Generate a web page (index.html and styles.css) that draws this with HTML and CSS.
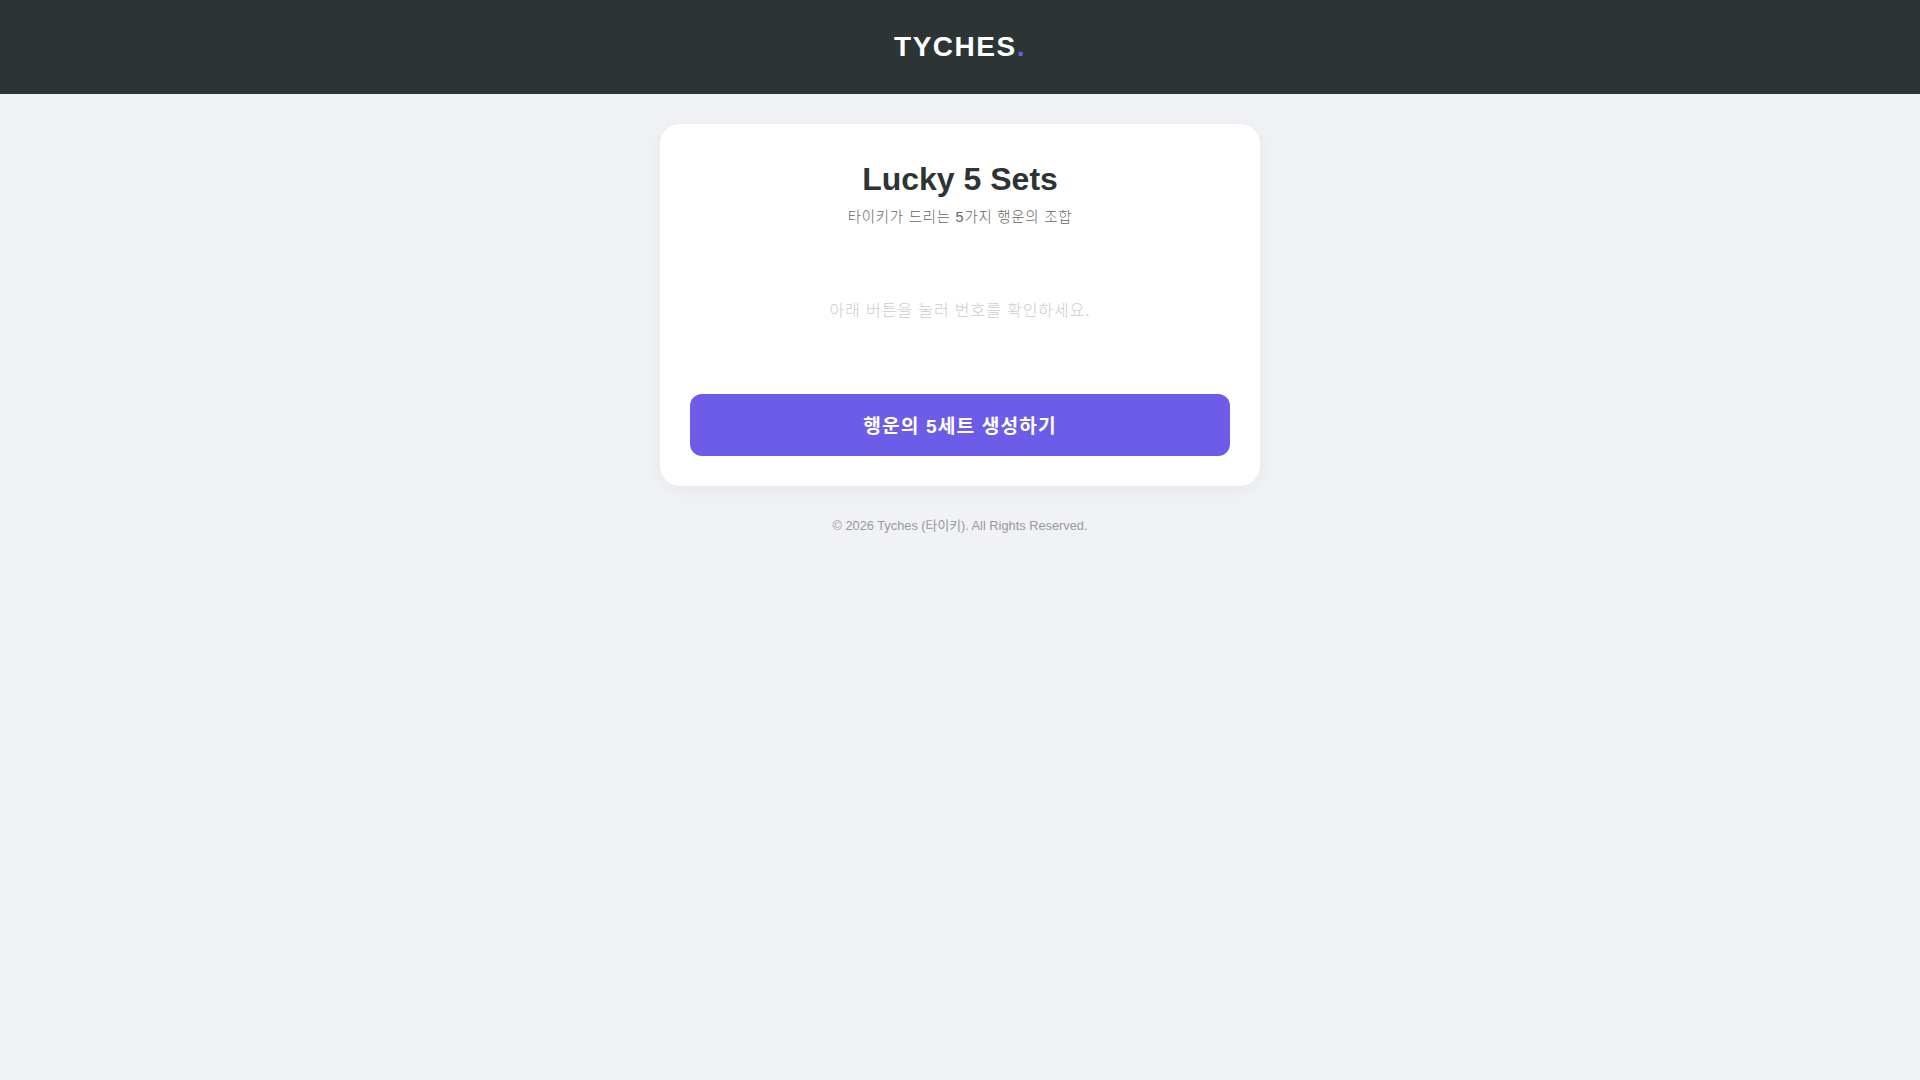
FILE: index.html
```html
<!DOCTYPE html>
<html lang="ko">
<head>
<meta charset="utf-8">
<title>Tyches</title>
<link rel="stylesheet" href="styles.css">
</head>
<body>
<header class="topbar">
  <div class="logo">TYCHES<span class="dot">.</span></div>
</header>
<main class="main">
  <section class="card">
    <h1 class="title">Lucky 5 Sets</h1>
    <p class="subtitle">타이키가 드리는 5가지 행운의 조합</p>
    <div class="result">
      <p class="placeholder">아래 버튼을 눌러 번호를 확인하세요.</p>
    </div>
    <button class="generate">행운의 5세트 생성하기</button>
  </section>
  <footer class="footer">© 2026 Tyches (타이키). All Rights Reserved.</footer>
</main>
</body>
</html>
```

FILE: styles.css
```css
* { box-sizing: border-box; }
html, body {
  margin: 0;
  padding: 0;
}
body {
  background: #f0f2f5;
  font-family: "Liberation Sans", "Noto Sans CJK KR", sans-serif;
  color: #2d3436;
}
.topbar {
  height: 94px;
  background: #2d3436;
  display: flex;
  align-items: center;
  justify-content: center;
}
.logo {
  color: #ffffff;
  font-size: 28px;
  font-weight: 700;
  letter-spacing: 1.5px;
  line-height: 1;
}
.dot { color: #6c5ce7; }
.main {
  display: flex;
  flex-direction: column;
  align-items: center;
  padding-top: 30px;
}
.card {
  width: 600px;
  background: #ffffff;
  border-radius: 20px;
  padding: 35px 30px 30px;
  box-shadow: 0 4px 20px rgba(0, 0, 0, 0.05);
  display: flex;
  flex-direction: column;
  align-items: center;
}
.title {
  margin: 0;
  font-size: 32px;
  line-height: 40px;
  font-weight: 700;
  color: #2d3436;
}
.subtitle {
  margin: 8px 0 0;
  font-weight: 300;
  font-size: 14.4px;
  line-height: 20px;
  letter-spacing: 0.8px;
  color: #666666;
}
.result {
  margin-top: 19px;
  height: 130px;
  width: 100%;
  display: flex;
  align-items: center;
  justify-content: center;
}
.placeholder {
  margin: 0;
  font-weight: 300;
  font-size: 16px;
  line-height: 20px;
  letter-spacing: 0.9px;
  color: #cccccc;
}
.generate {
  margin-top: 18px;
  width: 100%;
  height: 62px;
  border: none;
  border-radius: 12px;
  background: #6c5ce7;
  color: #ffffff;
  font-family: "Liberation Sans", "Noto Sans CJK KR", sans-serif;
  font-size: 19.2px;
  font-weight: 700;
  letter-spacing: 1.1px;
  cursor: pointer;
}
.footer {
  margin-top: 32px;
  font-size: 12.8px;
  line-height: 15px;
  color: #999999;
}
```
